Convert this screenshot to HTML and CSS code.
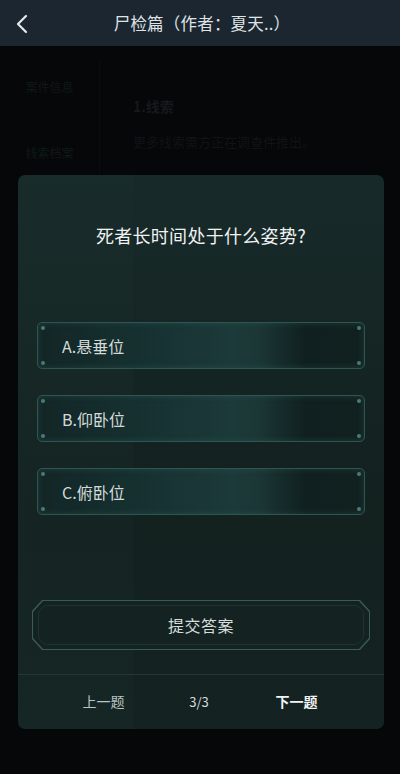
FILE: index.html
```html
<!DOCTYPE html>
<html lang="zh">
<head>
<meta charset="utf-8">
<link rel="stylesheet" href="styles.css">
</head>
<body>
<div class="screen">
  <header class="topbar">
    <svg class="back" width="14" height="20" viewBox="0 0 14 20"><path d="M11 2 L3 10 L11 18" fill="none" stroke="#e6e9ec" stroke-width="2.2" stroke-linecap="round" stroke-linejoin="round"/></svg>
    <div class="title">尸检篇（作者：夏天..）</div>
  </header>
  <div class="behind">
    <div class="side">
      <div class="side-item">案件信息</div>
      <div class="side-item">线索档案</div>
      <div class="side-item">推理</div>
    </div>
    <div class="main">
      <div class="clue-title">1.线索</div>
      <div class="clue-text">更多线索需方正在调查件推出。</div>
    </div>
  </div>
  <div class="modal">
    <div class="question">死者长时间处于什么姿势?</div>
    <div class="options">
      <div class="option"><span>A.悬垂位</span><i class="dot tl"></i><i class="dot tr"></i><i class="dot bl"></i><i class="dot br"></i></div>
      <div class="option"><span>B.仰卧位</span><i class="dot tl"></i><i class="dot tr"></i><i class="dot bl"></i><i class="dot br"></i></div>
      <div class="option"><span>C.俯卧位</span><i class="dot tl"></i><i class="dot tr"></i><i class="dot bl"></i><i class="dot br"></i></div>
    </div>
    <div class="submit-wrap">
      <div class="submit"><div class="submit-inner"><div class="submit-core">提交答案</div></div></div>
    </div>
    <div class="footer">
      <div class="prev">上一题</div>
      <div class="count">3/3</div>
      <div class="next">下一题</div>
    </div>
  </div>
</div>
</body>
</html>
```
FILE: styles.css
```css
* { box-sizing: border-box; margin: 0; padding: 0; }
html, body { width: 400px; height: 774px; background: #050708; overflow: hidden; }
body { font-family: "Noto Sans CJK SC", "Noto Sans", sans-serif; color: #e6e9ea; }
.screen { width: 400px; height: 774px; position: relative; background: #050708; }
.topbar { height: 46px; background: #1c2630; display: flex; align-items: center; justify-content: center; position: relative; }
.back { position: absolute; left: 15px; top: 14px; }
.title { font-size: 16.5px; color: #dfe3e6; letter-spacing: 0.2px; padding-left: 4px; }
.behind { display: flex; height: 130px; padding-top: 14px; }
.side { width: 100px; border-right: 1px solid #0a0d0e; padding-top: 18px; }
.side-item { font-size: 12px; color: #101a15; text-align: center; height: 66px; }
.side-item:last-child { color: #0e1616; }
.main { padding-left: 33px; padding-top: 36px; }
.clue-title { font-size: 14px; color: #16191b; font-weight: bold; }
.clue-text { font-size: 13px; color: #111315; margin-top: 16px; }
.modal { position: absolute; left: 18px; top: 175px; width: 366px; height: 554px; border-radius: 7px;
  background: linear-gradient(90deg, rgba(30,52,50,0.18) 0, rgba(30,52,50,0.18) 115px, rgba(0,0,0,0) 115px), linear-gradient(180deg, #172a29 0, #13211f 60%, #142322 100%);
  display: flex; flex-direction: column; }
.question { text-align: center; font-size: 18px; color: #f0f2f2; margin-top: 47px; line-height: 26px; letter-spacing: 0.3px; }
.options { display: flex; flex-direction: column; gap: 26px; padding: 0 19px 0 19px; margin-top: 74px; }
.option { position: relative; height: 47px; border: 1.5px solid #2d5551; border-radius: 5px;
  background: linear-gradient(90deg, #132626 0%, #163030 30%, #1c3a39 60%, #1b3635 68%, #102020 82%, #112120 100%);
  box-shadow: inset 0 0 6px rgba(60,110,105,0.35);
  display: flex; align-items: center; padding-left: 24px; font-size: 16px; color: #d3dbda; }
.dot { position: absolute; width: 4px; height: 4px; border-radius: 50%; background: #4b7a76; }
.dot.tl { left: 3px; top: 3px; } .dot.tr { right: 3px; top: 3px; }
.dot.bl { left: 3px; bottom: 3px; } .dot.br { right: 3px; bottom: 3px; }
.submit-wrap { padding: 0 14px; margin-top: 85px; }
.submit { height: 50px; background: #3a5b58; clip-path: polygon(10px 0, calc(100% - 10px) 0, 100% 11px, 100% calc(100% - 11px), calc(100% - 10px) 100%, 10px 100%, 0 calc(100% - 11px), 0 11px); padding: 1px; }
.submit-inner { height: 100%; background: #142322; clip-path: polygon(10px 0, calc(100% - 10px) 0, 100% 11px, 100% calc(100% - 11px), calc(100% - 10px) 100%, 10px 100%, 0 calc(100% - 11px), 0 11px); padding: 4px 5px; }
.submit-core { height: 100%; border: 1px solid #1d3331; border-radius: 10px; display: flex; align-items: center; justify-content: center; font-size: 16px; color: #d6dddc; letter-spacing: 0.5px; }
.footer { margin-top: 24px; border-top: 1px solid #22373a; flex: 1; display: flex; align-items: center; padding-bottom: 2px; font-size: 14px; }
.prev { width: 172px; text-align: center; color: #b9c3c2; }
.count { width: 20px; text-align: center; color: #d7dddd; font-size: 13px; }
.next { width: 176px; text-align: center; color: #f2f4f4; font-weight: bold; }
```
